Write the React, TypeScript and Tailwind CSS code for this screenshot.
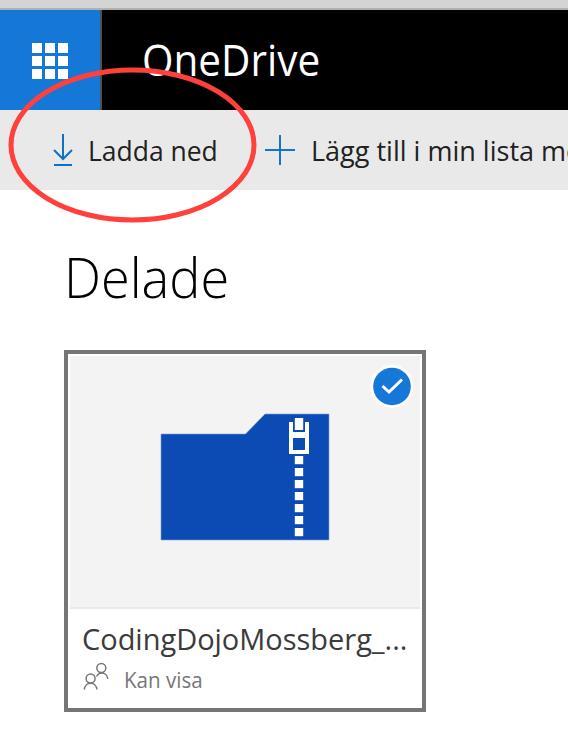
import React from 'react';

const fontStack = "font-['Open_Sans','Noto_Sans',sans-serif]";

function AppGrid() {
  return (
    <div className="grid grid-cols-3 content-start gap-[3px]">
      {Array.from({ length: 9 }, (_, i) => (
        <span key={i} className="size-[10px] bg-white" />
      ))}
    </div>
  );
}

function DownloadIcon() {
  return (
    <svg width="22" height="34" viewBox="0 0 22 34" fill="none" stroke="#0f70c6" strokeWidth="2">
      <path d="M11 1V26M2 17L11 26L20 17M2 32H20" />
    </svg>
  );
}

function PlusIcon() {
  return (
    <svg width="30" height="30" viewBox="0 0 30 30" stroke="#1474c8" strokeWidth="2">
      <path d="M15 0V30M0 15H30" />
    </svg>
  );
}

function ZipFolder() {
  return (
    <svg width="170" height="128" viewBox="160 413 170 128" className="block">
      <path d="M161 434H245.500L265 414H329V540H161Z" fill="#0c4bb3" stroke="#7f9fd6" strokeWidth="0.6" />
      <path d="M289 422H293V432H305V422H309V454H289Z" fill="#fff" />
      <path d="M293 438H305V450H293Z" fill="#0c4bb3" />
      <path d="M293.500 417H304.500V431H293.500Z" fill="#0c4bb3" />
      <path d="M294.800 418H303.200V430H294.800Z" fill="#fff" />
      {[456, 468, 480, 492, 504, 516, 528].map((y) => (
        <rect key={y} x="294.800" y={y} width="8.400" height="8.200" fill="#fff" />
      ))}
    </svg>
  );
}

function PeopleIcon() {
  return (
    <svg width="26" height="28" viewBox="83 663 26 28" fill="none" stroke="#767676" strokeWidth="1.500">
      <circle cx="101.300" cy="669" r="4.500" />
      <path d="M96.500 677.500C98 674.800 99.500 674 101.500 674C105 674 107.500 676.500 107.800 680" />
      <circle cx="90.600" cy="679.500" r="4.500" />
      <path d="M84.300 690.500C84.600 687 87.200 684.300 90.600 684.300C94 684.300 96.600 687 96.900 690.500" />
    </svg>
  );
}

export default function App() {
  return (
    <div className={`relative h-[750px] w-[568px] overflow-hidden bg-white ${fontStack}`}>
      <div className="h-2 bg-[#d4d4d4]" />
      <div className="h-[2px] bg-[#afafaf]" />
      <header className="flex h-[100px] bg-black">
        <div className="flex w-[102px] shrink-0 border-r-2 border-[#505050] bg-[#1578d8] pt-[33px] pl-8">
          <AppGrid />
        </div>
        <div className="pt-[19px] pl-[40px]">
          <h1 className="origin-left scale-x-[0.92] text-[44px] leading-[60px] whitespace-nowrap text-white">OneDrive</h1>
        </div>
      </header>
      <nav className="flex h-20 bg-[#e9e9e9]">
        <div className="flex w-[265px] shrink-0 pt-[23px] pl-[52px]">
          <DownloadIcon />
          <span className="mt-[-2px] ml-[14px] origin-left scale-x-[0.945] text-[28px] leading-[38px] whitespace-nowrap text-[#212121]">Ladda ned</span>
        </div>
        <div className="flex shrink-0 pt-[25px]">
          <PlusIcon />
          <span className="mt-[-4px] ml-[16px] origin-left scale-x-[0.965] text-[28px] leading-[38px] whitespace-nowrap text-[#212121]">Lägg till i min lista me</span>
        </div>
      </nav>
      <main className="pt-[48px] pl-16">
        <h2 className="w-max origin-left scale-x-[0.935] text-[56px] leading-[76px] font-light text-black">Delade</h2>
        <article className="mt-[36px] h-[362px] w-[362px] border-4 border-[#757776] bg-white p-[2px]">
          <div className="relative h-[253px] border-b-2 border-[#e9e9e9] bg-[#f3f3f3] pt-[57px] pl-[90px]">
            <ZipFolder />
            <svg className="absolute top-[9px] right-[6px]" width="44" height="44" viewBox="0 0 44 44" fill="none">
              <circle cx="22" cy="21.500" r="21.500" fill="#fff" />
              <circle cx="22" cy="21.500" r="18.800" fill="#1578d8" />
              <path d="M12.500 21L19 27L32 14.500" stroke="#fff" strokeWidth="3" />
            </svg>
          </div>
          <div className="pl-3">
            <p className="mt-[9px] w-max origin-left scale-x-[0.965] text-[30px] leading-[42px] text-[#3b3b3b]">CodingDojoMossberg_...</p>
            <div className="flex pt-[2px] pl-[1px]">
              <PeopleIcon />
              <span className="mt-[3px] ml-[15px] origin-left scale-x-[0.935] text-[22px] leading-[28px] text-[#767676]">Kan visa</span>
            </div>
          </div>
        </article>
      </main>
      <svg className="pointer-events-none absolute top-[60px] left-0" width="270" height="170" viewBox="0 60 270 170" fill="none">
        <ellipse cx="132.500" cy="145" rx="121.500" ry="75" stroke="#ff403b" strokeWidth="5" />
      </svg>
    </div>
  );
}
